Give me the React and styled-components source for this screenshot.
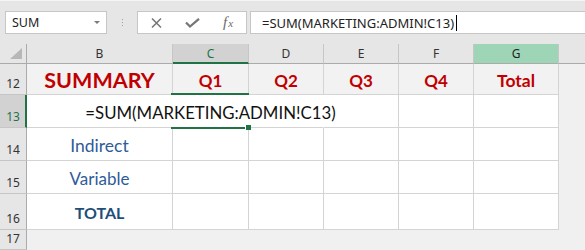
import React from "react";
import styled, { createGlobalStyle, css } from "styled-components";

const GlobalStyle = createGlobalStyle`
  html, body { margin: 0; padding: 0; width: 585px; height: 250px; overflow: hidden; background: #e6e6e6; }
  #root { width: 585px; height: 250px; }
  * { box-sizing: border-box; }
`;

const Page = styled.div`
  width: 585px;
  height: 250px;
  display: flex;
  flex-direction: column;
  overflow: hidden;
  background: #e6e6e6;
  border-top: 1px solid #f4f4f4;
  font-family: "Noto Sans", "Open Sans", sans-serif;
`;

const FormulaBar = styled.div`
  display: flex;
  height: 26px;
  margin-top: 10px;
  padding-left: 5px;
`;

const NameBox = styled.div`
  width: 102px;
  background: #fff;
  border: 1px solid #c6c6c6;
  display: flex;
  align-items: center;
  justify-content: space-between;
  padding: 0 6px;
  font-size: 12.5px;
  color: #222;
`;

const DropArrow = styled.span`
  width: 0;
  height: 0;
  border-left: 3px solid transparent;
  border-right: 3px solid transparent;
  border-top: 3px solid #7a7a7a;
`;

const Grip = styled.div`
  width: 30px;
  display: flex;
  flex-direction: column;
  align-items: center;
  justify-content: center;
  gap: 2px;
  span {
    width: 1px;
    height: 1px;
    background: #a0a0a0;
  }
`;

const ButtonBox = styled.div`
  width: 110px;
  background: #fff;
  border: 1px solid #c6c6c6;
  display: grid;
  grid-template-columns: repeat(3, 36px);
  align-items: center;
  justify-items: center;
`;

const Fx = styled.span`
  font-family: "Liberation Serif", "DejaVu Serif", serif;
  font-style: italic;
  color: #6a6a6a;
  font-size: 15px;
  line-height: 1;
  sub {
    font-size: 11px;
    vertical-align: baseline;
    margin-left: 1px;
  }
`;

const FormulaInput = styled.div`
  flex: 1;
  margin-left: 3px;
  background: #fff;
  border: 1px solid #c6c6c6;
  border-right: none;
  display: flex;
  align-items: center;
  padding-left: 11px;
  font-size: 13px;
  color: #222;
`;

const Caret = styled.span`
  display: inline-block;
  width: 1px;
  height: 16px;
  background: #000;
  margin-left: 2px;
`;

const Sheet = styled.div`
  margin-top: 10px;
  display: grid;
  grid-template-columns: 27px 146px 76px 75px 75px 75px 85px 1fr;
  grid-template-rows: 20px 31px 33px 33px 33px 36px 20px;
`;

const Corner = styled.div`
  background: #e6e6e6;
  border-right: 1px solid #ababab;
  border-bottom: 1px solid #ababab;
  position: relative;
  &::after {
    content: "";
    position: absolute;
    left: 10px;
    top: 4px;
    width: 0;
    height: 0;
    border-left: 12px solid transparent;
    border-bottom: 11px solid #b7b7b7;
  }
`;

const ColHeader = styled.div`
  background: #e6e6e6;
  border-right: 1px solid #c6c6c6;
  border-bottom: 1px solid #ababab;
  display: flex;
  align-items: center;
  justify-content: center;
  font-size: 12px;
  color: #333;
  ${(p) =>
    p.$active &&
    css`
      background: #d2d2d2;
      border-bottom: 2px solid #217346;
      color: #217346;
    `}
  ${(p) =>
    p.$selected &&
    css`
      background: #9fd5b7;
      color: #222;
    `}
`;

const HeaderFiller = styled.div`
  background: #e6e6e6;
  border-bottom: 1px solid #ababab;
`;

const RowHeader = styled.div`
  background: #e6e6e6;
  border-right: 1px solid #ababab;
  border-bottom: 1px solid #c6c6c6;
  display: flex;
  align-items: flex-end;
  justify-content: center;
  padding-bottom: 2px;
  font-size: 12px;
  line-height: 16px;
  color: #333;
  ${(p) =>
    p.$active &&
    css`
      background: #d2d2d2;
      border-right: 2px solid #217346;
      color: #217346;
      padding-left: 1px;
    `}
`;

const Cell = styled.div`
  background: ${(p) => (p.$fill ? "#f2f2f2" : "#fff")};
  border-right: 1px solid ${(p) => (p.$noRight ? "transparent" : "#d4d4d4")};
  border-bottom: 1px solid #d4d4d4;
  display: flex;
  align-items: center;
  justify-content: center;
  padding-top: 2px;
  font-family: Lato, "Open Sans", sans-serif;
  font-size: ${(p) => p.$size || 16}px;
  font-weight: ${(p) => (p.$bold ? 700 : 400)};
  color: ${(p) => p.$color || "#222"};
  white-space: nowrap;
  overflow: visible;
`;

const EditCell = styled(Cell)`
  position: relative;
  z-index: 2;
  &::before,
  &::after {
    content: "";
    position: absolute;
    left: -2px;
    right: -1px;
    height: 2px;
    background: #217346;
  }
  &::before {
    top: -2px;
  }
  &::after {
    bottom: -2px;
    right: 3px;
  }
`;

const FillHandle = styled.span`
  position: absolute;
  right: -3px;
  bottom: -3px;
  width: 6px;
  height: 5px;
  background: #217346;
  border-left: 1px solid #fff;
`;

const EditText = styled.span`
  position: relative;
  z-index: 3;
  background: #fff;
  color: #111;
  font-size: 16.8px;
`;

const Filler = styled.div`
  background: #f0f0f0;
  grid-column: ${(p) => p.$span || "auto"};
`;

const RED = "#c00000";
const BLUE = "#2e5b9a";
const DARKBLUE = "#1f4e79";

function CloseIcon() {
  return (
    <svg width="11" height="10" viewBox="0 0 11 10">
      <path d="M1 0.5 L10 9.5 M10 0.5 L1 9.5" stroke="#767676" strokeWidth="1.5" fill="none" />
    </svg>
  );
}

function CheckIcon() {
  return (
    <svg width="15" height="10" viewBox="0 0 15 10">
      <path d="M1 4.5 L5 8.5 L14 0.8" stroke="#767676" strokeWidth="2.2" fill="none" />
    </svg>
  );
}

const cols = ["B", "C", "D", "E", "F", "G"];

export default function App() {
  return (
    <>
      <GlobalStyle />
      <Page>
        <FormulaBar>
          <NameBox>
            <span>SUM</span>
            <DropArrow />
          </NameBox>
          <Grip>
            <span />
            <span />
            <span />
          </Grip>
          <ButtonBox>
            <CloseIcon />
            <CheckIcon />
            <Fx>
              f<sub>x</sub>
            </Fx>
          </ButtonBox>
          <FormulaInput>
            =SUM(MARKETING:ADMIN!C13)
            <Caret />
          </FormulaInput>
        </FormulaBar>

        <Sheet>
          <Corner />
          {cols.map((c) => (
            <ColHeader key={c} $active={c === "C"} $selected={c === "G"}>
              {c}
            </ColHeader>
          ))}
          <HeaderFiller />

          <RowHeader>12</RowHeader>
          <Cell $fill $bold $size={21.5} $color={RED}>SUMMARY</Cell>
          <Cell $fill $bold $size={17} $color={RED}>Q1</Cell>
          <Cell $fill $bold $size={17} $color={RED}>Q2</Cell>
          <Cell $fill $bold $size={17} $color={RED}>Q3</Cell>
          <Cell $fill $bold $size={17} $color={RED}>Q4</Cell>
          <Cell $fill $bold $size={17.5} $color={RED}>Total</Cell>
          <Filler />

          <RowHeader $active>13</RowHeader>
          <Cell $noRight />
          <EditCell $noRight>
            <EditText>=SUM(MARKETING:ADMIN!C13)</EditText>
            <FillHandle />
          </EditCell>
          <Cell $noRight />
          <Cell />
          <Cell />
          <Cell />
          <Filler />

          <RowHeader>14</RowHeader>
          <Cell $size={17.5} $color={BLUE}>Indirect</Cell>
          <Cell />
          <Cell />
          <Cell />
          <Cell />
          <Cell />
          <Filler />

          <RowHeader>15</RowHeader>
          <Cell $size={17} $color={BLUE}>Variable</Cell>
          <Cell />
          <Cell />
          <Cell />
          <Cell />
          <Cell />
          <Filler />

          <RowHeader>16</RowHeader>
          <Cell $bold $color={DARKBLUE}>TOTAL</Cell>
          <Cell />
          <Cell />
          <Cell />
          <Cell />
          <Cell />
          <Filler />

          <RowHeader>17</RowHeader>
          <Filler $span="span 7" />
        </Sheet>
      </Page>
    </>
  );
}
